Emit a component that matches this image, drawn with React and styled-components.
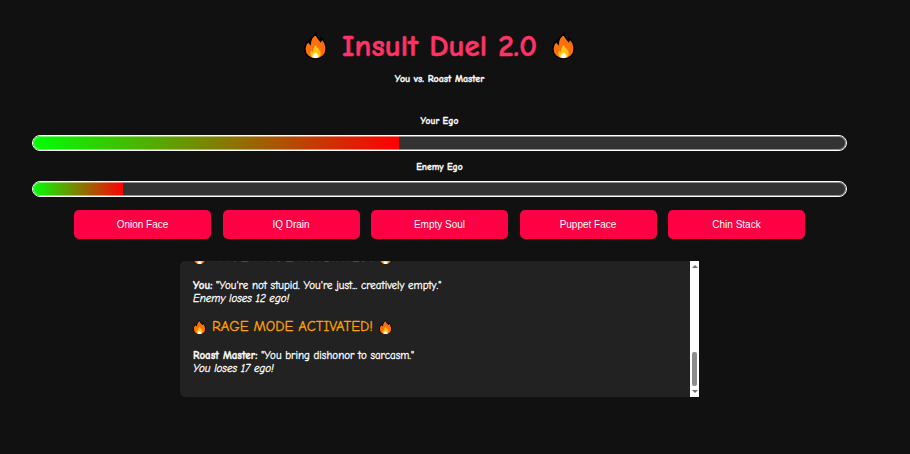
import { useEffect, useRef } from "react";
import styled, { createGlobalStyle } from "styled-components";

const GlobalStyle = createGlobalStyle`
  html, body {
    margin: 0;
    height: 100%;
    overflow: hidden;
    background: #111111;
  }
`;

const Page = styled.div`
  width: 879px;
  height: 454px;
  overflow: hidden;
  display: flex;
  flex-direction: column;
  align-items: center;
  color: #ffffff;
  font-family: "Comic Sans MS", "Comic Neue", cursive;
`;

const Title = styled.h1`
  display: flex;
  align-items: center;
  gap: 15px;
  margin: 27px 0 0;
  height: 38px;
  line-height: 38px;
  font-size: 31px;
  font-weight: 700;
  color: #ff3366;
  white-space: nowrap;
  -webkit-text-stroke: 0.5px #ff3366;
`;

const Subtitle = styled.p`
  margin: 8px 0 0;
  height: 12px;
  line-height: 12px;
  font-size: 10px;
  font-weight: 700;
  -webkit-text-stroke: 0.3px #ffffff;
`;

const EgoLabel = styled.div`
  margin-top: ${(p) => p.$top}px;
  height: 12px;
  line-height: 12px;
  font-size: 9.5px;
  font-weight: 700;
  -webkit-text-stroke: 0.3px #ffffff;
`;

const BarTrack = styled.div`
  position: relative;
  box-sizing: border-box;
  width: 815px;
  height: 16px;
  margin-top: 8px;
  border: 1px solid #ffffff;
  border-radius: 8px;
  background: #333333;
  overflow: hidden;

  &::after {
    content: "";
    position: absolute;
    inset: 0;
    border-radius: 7px;
    box-shadow: inset 0 0 0 1px rgba(255, 255, 255, 0.45);
  }
`;

const BarFill = styled.div`
  height: 100%;
  background: linear-gradient(to right, #00ff00, #ff0000);
`;

const Actions = styled.div`
  display: flex;
  gap: 11.5px;
  margin-top: 13px;
`;

const ActionButton = styled.button`
  width: 137px;
  height: 29px;
  padding: 0;
  border: none;
  border-radius: 5px;
  background: #ff0044;
  color: #ffffff;
  font-family: "Liberation Sans", Arial, sans-serif;
  font-size: 10px;
`;

const LogFrame = styled.div`
  display: flex;
  width: 519px;
  height: 136px;
  margin-top: 22px;
  border-radius: 5px 0 0 5px;
  background: #222222;
  overflow: hidden;
`;

const LogBody = styled.div`
  box-sizing: border-box;
  flex: 1;
  padding: 0 13px 9px;
  overflow-y: auto;
  scrollbar-width: none;
  font-size: 11px;
  line-height: 13px;
  -webkit-text-stroke: 0.3px #ffffff;
`;

const Entry = styled.p`
  margin: 0 0 13px;
`;

const Rage = styled.p`
  display: flex;
  align-items: center;
  gap: 6px;
  margin: 0 0 13px;
  height: 18px;
  line-height: 18px;
  font-size: 14.7px;
  color: orange;
  -webkit-text-stroke: 0.3px orange;
`;

const ScrollBar = styled.div`
  display: flex;
  flex-direction: column;
  align-items: center;
  width: 9px;
  background: #ffffff;
`;

const ScrollArrow = styled.div`
  flex: 0 0 11px;
  display: flex;
  align-items: center;

  &::before {
    content: "";
    border-left: 3.5px solid transparent;
    border-right: 3.5px solid transparent;
    border-${(p) => (p.$down ? "top" : "bottom")}: 3.5px solid #707070;
  }
`;

const ScrollTrack = styled.div`
  flex: 1;
  display: flex;
  align-items: flex-end;
`;

const ScrollThumb = styled.div`
  width: 5px;
  height: 34px;
  border-radius: 2px;
  background: #8c8c8c;
`;

function Flame({ size }) {
  return (
    <svg width={size} height={size * 1.15} viewBox="0 0 20 23" aria-hidden="true">
      <path
        d="M10.500 .8c.6 3.200 2.200 4.400 4 6.400.4-.9.5-1.700.4-2.700 2.800 2.400 4.400 5.800 4.400 9.200 0 5.300-4 8.800-9.300 8.800S.7 19 .7 13.700c0-3.200 1.600-5.300 3.300-7.200.2 1.300.6 2.100 1.400 2.900C5.400 6 7.200 2.900 10.500 .8z"
        fill="#ff6f0a"
        stroke="#000000"
        strokeWidth="1.400"
      />
      <path
        d="M10.400 10.500c.4 1.900 1.900 2.800 3.100 4.300 1.400 1.900 1.400 3.800.4 5.500-.9 1.100-2.300 1.600-3.900 1.600s-3-.5-3.900-1.700c-1-1.700-.8-3.500.4-4.900.3.700.7 1.100 1.200 1.400-.1-2.300.8-4.500 2.700-6.200z"
        fill="#ffc61a"
      />
      <path d="M10 17c1.500 1.200 2.600 2.200 2.600 3.400 0 .8-1.100 1.300-2.600 1.300s-2.700-.5-2.700-1.300c0-1.200 1.300-2.200 2.700-3.400z" fill="#fffbe8" />
    </svg>
  );
}

const moves = ["Onion Face", "IQ Drain", "Empty Soul", "Puppet Face", "Chin Stack"];

const history = [
  { rage: true },
  { speaker: "You", line: "You're not stupid. You're just... creatively empty.", result: "Enemy loses 12 ego!" },
  { rage: true },
  { speaker: "Roast Master", line: "You bring dishonor to sarcasm.", result: "You loses 17 ego!" },
];

export default function App() {
  const logRef = useRef(null);

  useEffect(() => {
    logRef.current.scrollTop = logRef.current.scrollHeight;
  }, []);

  return (
    <Page>
      <GlobalStyle />
      <Title>
        <Flame size={23} />
        <span>Insult Duel 2.0</span>
        <Flame size={23} />
      </Title>
      <Subtitle>You vs. Roast Master</Subtitle>
      <EgoLabel $top={30}>Your Ego</EgoLabel>
      <BarTrack>
        <BarFill style={{ width: "45%" }} />
      </BarTrack>
      <EgoLabel $top={10}>Enemy Ego</EgoLabel>
      <BarTrack>
        <BarFill style={{ width: "11.1%" }} />
      </BarTrack>
      <Actions>
        {moves.map((move) => (
          <ActionButton key={move}>{move}</ActionButton>
        ))}
      </Actions>
      <LogFrame>
        <LogBody ref={logRef}>
          {history.map((item, i) =>
            item.rage ? (
              <Rage key={i}>
                <Flame size={13} />
                <span>RAGE MODE ACTIVATED!</span>
                <Flame size={13} />
              </Rage>
            ) : (
              <Entry key={i}>
                <strong>{item.speaker}:</strong> "{item.line}"
                <br />
                <em>{item.result}</em>
              </Entry>
            )
          )}
        </LogBody>
        <ScrollBar>
          <ScrollArrow />
          <ScrollTrack>
            <ScrollThumb />
          </ScrollTrack>
          <ScrollArrow $down />
        </ScrollBar>
      </LogFrame>
    </Page>
  );
}
